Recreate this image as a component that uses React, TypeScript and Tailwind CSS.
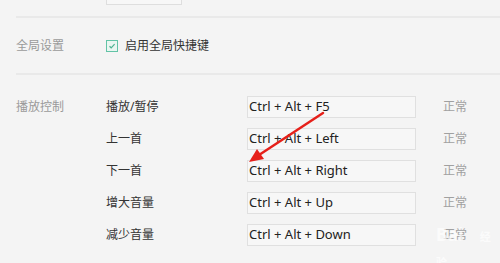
import React from "react";

const rows = [
  { name: "播放/暂停", keys: "Ctrl + Alt + F5" },
  { name: "上一首", keys: "Ctrl + Alt + Left" },
  { name: "下一首", keys: "Ctrl + Alt + Right" },
  { name: "增大音量", keys: "Ctrl + Alt + Up" },
  { name: "减少音量", keys: "Ctrl + Alt + Down" },
];

const font = {
  fontFamily: '"Noto Sans", "Noto Sans CJK SC", sans-serif',
};

export default function App() {
  return (
    <div
      className="relative w-[500px] h-[263px] overflow-hidden bg-[#f4f4f4]"
      style={font}
    >
      {/* partially visible box above */}
      <div className="ml-[106px] -mt-[17px] w-[76px] h-[22px] border border-[#dedede] bg-[#f7f7f7]" />
      <div className="mt-[11px] ml-4 h-[2px] bg-[#e9e9e9]" />

      {/* 全局设置 */}
      <div className="flex items-center h-[55px] ml-4">
        <div className="w-[90px] text-[12px] text-[#9a9a9a]">全局设置</div>
        <div className="flex items-center gap-[7px]">
          <div className="flex items-center justify-center w-[12px] h-[12px] border border-[#62c3a6] bg-[#eaf6f1]">
            <svg width="8" height="8" viewBox="0 0 8 8">
              <path d="M1.5 4.2 L3.2 5.8 L6.6 2.2" fill="none" stroke="#4fb393" strokeWidth="1.2" />
            </svg>
          </div>
          <span className="text-[12px] text-[#333]">启用全局快捷键</span>
        </div>
      </div>
      <div className="ml-4 h-[2px] bg-[#e9e9e9]" />

      {/* 播放控制 */}
      <div className="flex ml-4 pt-[21px]">
        <div className="w-[90px] h-[22px] flex items-center text-[12px] text-[#9a9a9a]">播放控制</div>
        <div className="flex flex-col gap-[10px]">
          {rows.map((r) => (
            <div key={r.name} className="flex items-center h-[22px]">
              <div className="w-[141px] text-[12px] text-[#333]">{r.name}</div>
              <div className="w-[169px] h-[22px] flex items-center pl-[1px] border border-[#e0e0e0] bg-[#f7f7f7] text-[13px] text-[#222]">
                {r.keys}
              </div>
              <div className="ml-[27px] text-[12px] text-[#a0a0a0]">正常</div>
            </div>
          ))}
        </div>
      </div>

      {/* red arrow annotation */}
      <svg className="absolute left-0 top-0" width="500" height="263" viewBox="0 0 500 263">
        <line x1="323" y1="113" x2="259" y2="155" stroke="#e6201a" strokeWidth="2.5" strokeLinecap="round" />
        <polygon points="249,162 264,159 257,149" fill="#e6201a" />
      </svg>

      {/* faint watermark */}
      <div className="absolute left-[436px] top-[222px] text-[17px] font-bold text-white/70 tracking-wide">
        Bai<span className="text-[11px] ml-[16px]">经验</span>
      </div>
    </div>
  );
}
